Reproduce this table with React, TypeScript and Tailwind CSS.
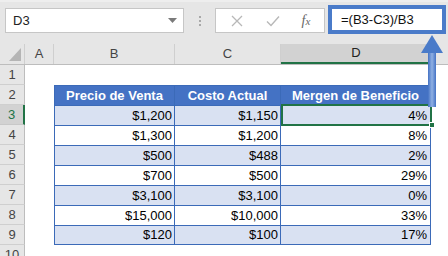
import React from "react";

const rows = [
  { n: 3, b: "$1,200", c: "$1,150", d: "4%" },
  { n: 4, b: "$1,300", c: "$1,200", d: "8%" },
  { n: 5, b: "$500", c: "$488", d: "2%" },
  { n: 6, b: "$700", c: "$500", d: "29%" },
  { n: 7, b: "$3,100", c: "$3,100", d: "0%" },
  { n: 8, b: "$15,000", c: "$10,000", d: "33%" },
  { n: 9, b: "$120", c: "$100", d: "17%" },
];

function RowHeader({ n, selected }: { n: number; selected?: boolean }) {
  return (
    <div
      className={
        selected
          ? "w-[25px] h-full shrink-0 bg-[#d2d2d2] border-r-2 border-r-[#217346] border-b border-b-[#c8c8c8] flex items-center justify-center text-[13px] text-[#217346]"
          : "w-[25px] h-full shrink-0 bg-[#e6e6e6] border-r border-r-[#bdbdbd] border-b border-b-[#cfcfcf] flex items-center justify-center text-[13px] text-[#444]"
      }
    >
      {n}
    </div>
  );
}

export default function App() {
  return (
    <div className="relative w-[448px] h-[256px] overflow-hidden bg-white font-['Liberation_Sans',Arial,sans-serif] text-black">
      {/* Formula bar */}
      <div className="h-[44px] bg-[#e6e6e6] flex items-start border-t-2 border-t-[#eeeeee]">
        <div className="ml-[5px] mt-[6px] w-[179px] h-[25px] bg-white border border-[#c6c6c6] flex items-center pl-[7px] pr-[6px]">
          <span className="text-[13px] text-[#222] flex-1">D3</span>
          <svg width="9" height="5" viewBox="0 0 9 5">
            <path d="M0 0 L9 0 L4.5 5 Z" fill="#7a7a7a" />
          </svg>
        </div>
        <div className="w-[31px] h-[25px] mt-[6px] flex flex-col items-center justify-center gap-[2px]">
          <div className="w-[2px] h-[2px] bg-[#a8a8a8]" />
          <div className="w-[2px] h-[2px] bg-[#a8a8a8]" />
          <div className="w-[2px] h-[2px] bg-[#a8a8a8]" />
        </div>
        <div className="mt-[6px] w-[110px] h-[25px] bg-white border border-[#c6c6c6] flex items-center">
          <div className="w-[42px] flex justify-center">
            <svg width="12" height="12" viewBox="0 0 12 12">
              <path d="M1 1 L11 11 M11 1 L1 11" stroke="#b8b8b8" strokeWidth="1.3" />
            </svg>
          </div>
          <div className="w-[30px] flex justify-center">
            <svg width="14" height="12" viewBox="0 0 14 12">
              <path d="M1 6.5 L5 10.5 L13 1.5" stroke="#b8b8b8" strokeWidth="1.4" fill="none" />
            </svg>
          </div>
          <div className="flex-1 flex justify-center">
            <span className="font-['Liberation_Serif',serif] italic text-[14px] text-[#666]">
              f<span className="text-[11px]">x</span>
            </span>
          </div>
        </div>
        <div className="ml-[3px] mt-[3px] w-[118px] h-[29px] bg-white border-4 border-[#4a7bc9] flex items-center pl-[9px]">
          <span className="text-[13px] text-[#111]">=(B3-C3)/B3</span>
        </div>
      </div>

      {/* Column headers */}
      <div className="h-[21px] flex bg-[#e6e6e6] border-b border-b-[#bdbdbd]">
        <div className="w-[25px] shrink-0 border-r border-r-[#cfcfcf] flex items-end justify-end pr-[3px] pb-[3px]">
          <svg width="12" height="13" viewBox="0 0 12 13">
            <path d="M12 0 L12 13 L0 13 Z" fill="#b5b5b5" />
          </svg>
        </div>
        <div className="w-[29px] shrink-0 border-r border-r-[#cfcfcf] flex items-center justify-center text-[13px] text-[#444]">A</div>
        <div className="w-[121px] shrink-0 border-r border-r-[#cfcfcf] flex items-center justify-center text-[13px] text-[#444]">B</div>
        <div className="w-[106px] shrink-0 border-r border-r-[#cfcfcf] flex items-center justify-center text-[13px] text-[#444]">C</div>
        <div className="w-[150px] shrink-0 bg-[#d2d2d2] border-b-2 border-b-[#217346] flex items-center justify-center text-[13px] text-[#222]">D</div>
        <div className="flex-1 border-l border-l-[#cfcfcf]" />
      </div>

      {/* Row 1 */}
      <div className="h-[20px] flex">
        <RowHeader n={1} />
        <div className="flex-1" />
      </div>

      {/* Row 2: table header */}
      <div className="h-[20px] flex">
        <RowHeader n={2} />
        <div className="w-[29px] shrink-0" />
        <div className="w-[121px] shrink-0 bg-[#4472c4] border-l border-t border-r border-[#3b6ab8] flex items-center justify-center text-[13px] font-bold text-white">
          Precio de Venta
        </div>
        <div className="w-[106px] shrink-0 bg-[#4472c4] border-t border-r border-[#3b6ab8] flex items-center justify-center text-[13px] font-bold text-white">
          Costo Actual
        </div>
        <div className="w-[150px] shrink-0 bg-[#4472c4] border-t border-r border-[#3b6ab8] flex items-center justify-center text-[13px] font-bold text-white">
          Mergen de Beneficio
        </div>
        <div className="flex-1" />
      </div>

      {rows.map((r, i) => {
        const bg = i % 2 === 0 ? "bg-[#d9e1f2]" : "bg-white";
        const last = i === rows.length - 1;
        return (
          <div key={r.n} className="h-[20px] flex">
            <RowHeader n={r.n} selected={r.n === 3} />
            <div className="w-[29px] shrink-0" />
            <div
              className={`w-[121px] shrink-0 ${bg} border-l border-t border-r ${last ? "border-b" : ""} border-[#3b6ab8] flex items-center justify-end pr-[2px] text-[13px]`}
            >
              {r.b}
            </div>
            <div
              className={`w-[106px] shrink-0 ${bg} border-t border-r ${last ? "border-b" : ""} border-[#3b6ab8] flex items-center justify-end pr-[2px] text-[13px]`}
            >
              {r.c}
            </div>
            <div
              className={`w-[150px] shrink-0 ${bg} border-t border-r ${last ? "border-b" : ""} border-[#3b6ab8] flex items-center justify-end pr-[3px] text-[13px]`}
            >
              {r.d}
            </div>
            <div className="flex-1" />
          </div>
        );
      })}

      {/* Row 10 */}
      <div className="h-[20px] flex">
        <RowHeader n={10} />
        <div className="flex-1" />
      </div>

      {/* Selected cell D3 */}
      <div className="absolute left-[281px] top-[104px] w-[151px] h-[22px] border-2 border-[#217346] pointer-events-none" />
      <div className="absolute left-[429px] top-[122px] w-[6px] h-[6px] bg-[#217346] border border-white" />

      {/* Annotation arrow */}
      <svg className="absolute left-[420px] top-[33px]" width="26" height="74" viewBox="0 0 26 74">
        <defs>
          <linearGradient id="shaft" x1="0" y1="0" x2="1" y2="0">
            <stop offset="0" stopColor="#4472c4" />
            <stop offset="0.5" stopColor="#8fb0e3" />
            <stop offset="1" stopColor="#4472c4" />
          </linearGradient>
        </defs>
        <rect x="8" y="18" width="8" height="56" fill="url(#shaft)" />
        <path d="M12 2 L23 20 L1 20 Z" fill="#4a7bc9" />
      </svg>
    </div>
  );
}
